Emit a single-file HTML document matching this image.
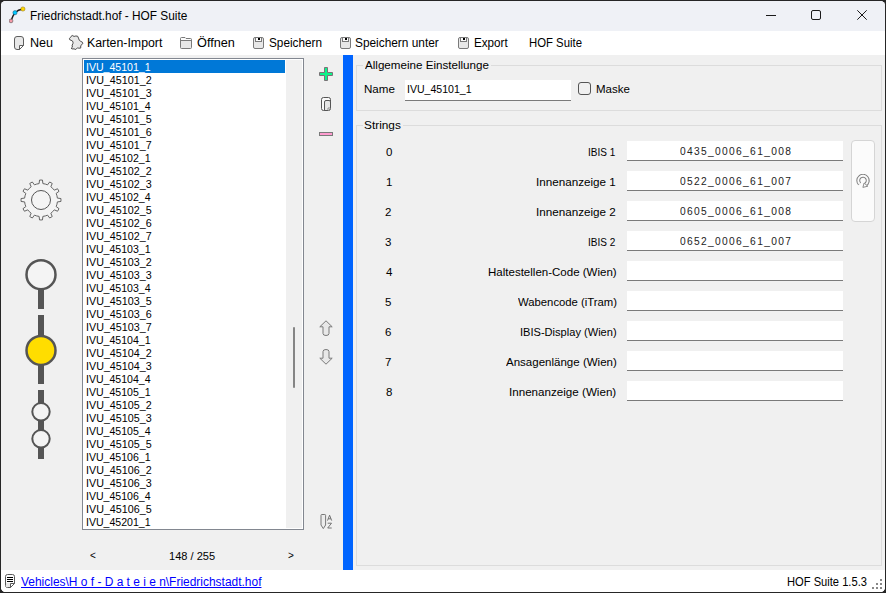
<!DOCTYPE html>
<html><head><meta charset="utf-8">
<style>
*{box-sizing:border-box}
html,body{margin:0;padding:0}
body{width:886px;height:593px;overflow:hidden;background:#262626;position:relative;font-family:"Liberation Sans",sans-serif;font-size:12px;color:#000}
.win{position:absolute;left:0;top:0;width:886px;height:593px;border-radius:8px;overflow:hidden;background:#f0f0f0}
.fe{position:absolute;background:#262626}
.title{position:absolute;left:0;top:0;width:886px;height:31px;background:#eff1f6}
.menu{position:absolute;left:0;top:31px;width:886px;height:24px;background:#fff}
.status{position:absolute;left:0;top:570px;width:886px;height:23px;background:#fff}
.t{position:absolute;white-space:nowrap;line-height:13px;font-size:12px;transform-origin:0 0;color:#000}
.list{position:absolute;left:82px;top:58px;width:222px;height:472px;border:1px solid #828790;background:#fff}
.sel{position:absolute;left:84px;top:60px;width:201px;height:13px;background:#0078d7}
.track{position:absolute;left:286px;top:60px;width:16px;height:468px;background:#f0f0f0}
.thumb{position:absolute;left:293px;top:327px;width:2px;height:61px;background:#858585;border-radius:1px}
.bluebar{position:absolute;left:343px;top:55px;width:10px;height:515px;background:#0064ff}
.gb{position:absolute;border:1px solid #dcdcdc}
.gbt{position:absolute;background:#f0f0f0;height:6px}
.inp{position:absolute;background:#fff;border-bottom:1px solid #7a7a7a}
</style></head><body>
<div class="win">
  <div class="title">
    <svg style="position:absolute;left:9px;top:6px" width="18" height="18" viewBox="0 0 18 18">
      <path d="M2 15 Q4 9 6 6.7 Q9 3.6 13.9 3" stroke="#1a1a1a" stroke-width="1.3" fill="none"/>
      <circle cx="2" cy="14.9" r="1.9" fill="#f59aa8" stroke="#555" stroke-width="0.6"/>
      <circle cx="6" cy="6.7" r="2.1" fill="#00c8ff" stroke="#1a4a66" stroke-width="0.5"/>
      <circle cx="13.9" cy="3" r="2.1" fill="#ffd800" stroke="#8a6a00" stroke-width="0.5"/>
    </svg>
    <div style="position:absolute;left:766px;top:15px;width:10px;height:1px;background:#1a1a1a"></div>
    <div style="position:absolute;left:811px;top:10px;width:10px;height:10px;border:1px solid #1a1a1a;border-radius:2px"></div>
    <svg style="position:absolute;left:857px;top:10px" width="10" height="10" viewBox="0 0 10 10"><path d="M0.3 0.3L9.7 9.7M9.7 0.3L0.3 9.7" stroke="#1a1a1a" stroke-width="1"/></svg>
  </div>
  <div class="menu">
    <svg style="position:absolute;left:14px;top:5px" width="10" height="14" viewBox="0 0 10 14"><path d="M3 0.5H7Q9.5 0.5 9.5 3V9.5L5.5 13.5H3Q0.5 13.5 0.5 11V3Q0.5 0.5 3 0.5Z" fill="#e8e8e8" stroke="#5e5e5e"/><path d="M5.5 13.5V9.5H9.5Z" fill="#fff" stroke="#5e5e5e" stroke-linejoin="round"/></svg>
    <svg style="position:absolute;left:66px;top:2px" width="20" height="20" viewBox="0 0 20 20"><path d="M5.1 3.4 L6.2 2.5 L8.1 3.4 L9.8 3.0 L11.6 3.2 L12.5 5.1 L13.3 7.3 L14.8 8.4 L16.5 9.3 L16.7 10.8 L15.9 11.6 L14.8 12.5 L14.7 14.2 L14.8 15.0 L12.8 15.2 L11.5 14.8 L9.8 16.5 L8.1 15.9 L6.1 15.9 L5.1 15.3 L6.4 14.2 L6.1 12.1 L6.9 10.8 L7.1 9.8 L6.6 8.1 L5.1 7.3 L3.7 6.7 L3.4 5.4 L4.4 4.6Z" fill="#e8e8e8" stroke="#4a4a4a" stroke-width="1" stroke-linejoin="round"/></svg>
    <svg style="position:absolute;left:180px;top:6px" width="12" height="12" viewBox="0 0 12 12"><path d="M1.5 0.5H5L6 1.5H10.5Q11.5 1.5 11.5 2.5V10.5Q11.5 11.5 10.5 11.5H1.5Q0.5 11.5 0.5 10.5V1.5Q0.5 0.5 1.5 0.5Z" fill="#e8e8e8" stroke="#7a7a7a"/><path d="M1 1H5L6 2H11V3.5H1Z" fill="#fbfbfb"/><path d="M0.5 3.5H11.5" stroke="#7a7a7a"/></svg>
    <svg style="position:absolute;left:253px;top:6px" width="11" height="12" viewBox="0 0 11 12"><rect x="0.5" y="0.5" width="10" height="11" rx="1.5" fill="#e8e8e8" stroke="#7a7a7a"/><rect x="2.5" y="0.5" width="6" height="4" fill="#fbfbfb" stroke="#7a7a7a"/><rect x="5" y="1" width="2" height="2" fill="#000"/></svg>
    <svg style="position:absolute;left:340px;top:6px" width="11" height="12" viewBox="0 0 11 12"><rect x="0.5" y="0.5" width="10" height="11" rx="1.5" fill="#e8e8e8" stroke="#7a7a7a"/><rect x="2.5" y="0.5" width="6" height="4" fill="#fbfbfb" stroke="#7a7a7a"/><rect x="5" y="1" width="2" height="2" fill="#000"/></svg>
    <svg style="position:absolute;left:458px;top:6px" width="11" height="12" viewBox="0 0 11 12"><rect x="0.5" y="0.5" width="10" height="11" rx="1.5" fill="#e8e8e8" stroke="#7a7a7a"/><rect x="2.5" y="0.5" width="6" height="4" fill="#fbfbfb" stroke="#7a7a7a"/><rect x="5" y="1" width="2" height="2" fill="#000"/></svg>
  </div>

  <svg style="position:absolute;left:0;top:55px" width="80" height="420" viewBox="0 55 80 420">
    <g transform="translate(41,200)">
      <path d="M-4.27 -15.94 L-1.90 -16.39 L-1.46 -19.95 L1.46 -19.95 L1.90 -16.39 L4.27 -15.94 L6.55 -15.14 L8.70 -18.01 L11.24 -16.54 L9.84 -13.25 L11.67 -11.67 L13.25 -9.84 L16.54 -11.24 L18.01 -8.70 L15.14 -6.55 L15.94 -4.27 L16.39 -1.90 L19.95 -1.46 L19.95 1.46 L16.39 1.90 L15.94 4.27 L15.14 6.55 L18.01 8.70 L16.54 11.24 L13.25 9.84 L11.67 11.67 L9.84 13.25 L11.24 16.54 L8.70 18.01 L6.55 15.14 L4.27 15.94 L1.90 16.39 L1.46 19.95 L-1.46 19.95 L-1.90 16.39 L-4.27 15.94 L-6.55 15.14 L-8.70 18.01 L-11.24 16.54 L-9.84 13.25 L-11.67 11.67 L-13.25 9.84 L-16.54 11.24 L-18.01 8.70 L-15.14 6.55 L-15.94 4.27 L-16.39 1.90 L-19.95 1.46 L-19.95 -1.46 L-16.39 -1.90 L-15.94 -4.27 L-15.14 -6.55 L-18.01 -8.70 L-16.54 -11.24 L-13.25 -9.84 L-11.67 -11.67 L-9.84 -13.25 L-11.24 -16.54 L-8.70 -18.01 L-6.55 -15.14Z" fill="#f4f4f4" stroke="#666" stroke-width="1"/>
      <circle r="9.5" fill="none" stroke="#555" stroke-width="1"/>
    </g>
    <rect x="38" y="289" width="6" height="20" fill="#555"/>
    <rect x="38" y="315" width="6" height="22" fill="#555"/>
    <rect x="38" y="364" width="6" height="20" fill="#555"/>
    <rect x="38" y="390" width="6" height="15" fill="#555"/>
    <rect x="38" y="419" width="6" height="12" fill="#555"/>
    <rect x="38" y="446" width="6" height="13" fill="#555"/>
    <circle cx="41" cy="274.7" r="14.5" fill="#f4f4f4" stroke="#555" stroke-width="2.5"/>
    <circle cx="41" cy="350.4" r="14.5" fill="#ffdd00" stroke="#555" stroke-width="2.5"/>
    <circle cx="41" cy="411.8" r="8.7" fill="#f4f4f4" stroke="#555" stroke-width="2"/>
    <circle cx="41" cy="438.8" r="8.7" fill="#f4f4f4" stroke="#555" stroke-width="2"/>
  </svg>

  <div class="list"></div>
  <div class="sel"></div>
  <div class="track"></div>
  <div class="thumb"></div>

  <svg style="position:absolute;left:319px;top:67px" width="14" height="14" viewBox="0 0 14 14"><path d="M5.5 0.5H8.5V5.5H13.5V8.5H8.5V13.5H5.5V8.5H0.5V5.5H5.5Z" fill="#0cf58a" stroke="#7a7276" stroke-width="1"/></svg>
  <svg style="position:absolute;left:321px;top:97px" width="10" height="14" viewBox="0 0 10 14"><rect x="0.5" y="0.5" width="9" height="13" rx="2" fill="#f8f8f8" stroke="#555"/><path d="M3.5 13.5V5Q3.5 3.5 5 3.5H8Q9.5 3.5 9.5 5V11L7 13.5Z" fill="#e6e6e6" stroke="#555"/><path d="M9.5 11H7V13.5" fill="#fff" stroke="#777" stroke-width="0.8"/></svg>
  <div style="position:absolute;left:319px;top:132px;width:14px;height:4px;background:#ff9cd0;border:1px solid #7a7a7a"></div>
  <svg style="position:absolute;left:319px;top:320px" width="14" height="16" viewBox="0 0 14 16"><path d="M7 0.8L13.2 6.8H10V13.5Q10 15.5 7 15.5Q4 15.5 4 13.5V6.8H0.8Z" fill="#e8e8e8" stroke="#7a7a7a" stroke-width="1" stroke-linejoin="round"/></svg>
  <svg style="position:absolute;left:319px;top:349px" width="14" height="16" viewBox="0 0 14 16"><path d="M7 15.2L13.2 9.2H10V2.5Q10 0.5 7 0.5Q4 0.5 4 2.5V9.2H0.8Z" fill="#e8e8e8" stroke="#7a7a7a" stroke-width="1" stroke-linejoin="round"/></svg>
  <svg style="position:absolute;left:320px;top:513px" width="14" height="17" viewBox="0 0 14 17"><path d="M1.9 1.5H4.8Q5.6 1.5 5.6 2.3V12L3.3 15.6L1 12V2.3Q1 1.5 1.9 1.5Z" fill="#ececec" stroke="#777" stroke-width="1"/><path d="M7.5 7.6L9.6 2.2L11.7 7.6M8.3 5.8H10.9" fill="none" stroke="#666" stroke-width="0.9"/><path d="M7.7 10.2H11.5L7.7 15H11.7" fill="none" stroke="#666" stroke-width="0.9"/></svg>

  <div class="bluebar"></div>

  <div class="gb" style="left:356px;top:65px;width:526px;height:46px"></div>
  <div class="gbt" style="left:363px;top:62px;width:128px"></div>
  <div class="inp" style="left:405px;top:80px;width:166px;height:21px"></div>
  <div style="position:absolute;left:578px;top:82px;width:13px;height:13px;border:1px solid #555;border-radius:3px;background:#f0f0f0"></div>

  <div class="gb" style="left:356px;top:125px;width:526px;height:441px"></div>
  <div class="gbt" style="left:363px;top:122px;width:40px"></div>
<div class="inp" style="left:627px;top:141px;width:216px;height:20px"></div>
<div class="inp" style="left:627px;top:171px;width:216px;height:20px"></div>
<div class="inp" style="left:627px;top:201px;width:216px;height:20px"></div>
<div class="inp" style="left:627px;top:231px;width:216px;height:20px"></div>
<div class="inp" style="left:627px;top:261px;width:216px;height:20px"></div>
<div class="inp" style="left:627px;top:291px;width:216px;height:20px"></div>
<div class="inp" style="left:627px;top:321px;width:216px;height:20px"></div>
<div class="inp" style="left:627px;top:351px;width:216px;height:20px"></div>
<div class="inp" style="left:627px;top:381px;width:216px;height:20px"></div>

  <div style="position:absolute;left:851px;top:140px;width:24px;height:82px;background:#fbfbfb;border:1px solid #d5d5d5;border-radius:4px"></div>
  <svg style="position:absolute;left:856px;top:174px" width="15" height="15" viewBox="0 0 15 15"><path d="M3.64 9.86A4.75 4.75 0 1 1 9.4 10.6" fill="none" stroke="#808080" stroke-width="3.9"/><path d="M3.64 9.86A4.75 4.75 0 1 1 9.4 10.6" fill="none" stroke="#fbfbfb" stroke-width="1.9"/><path d="M6.9 13.4L11.8 12.2L8.1 9Z" fill="#fbfbfb" stroke="#808080" stroke-width="0.9" stroke-linejoin="round"/></svg>

  <div class="status">
    <svg style="position:absolute;left:5px;top:4px" width="10" height="14" viewBox="0 0 10 14"><path d="M2.5 0.5H7.5Q9.5 0.5 9.5 2.5V9.5L5.5 13.5H2.5Q0.5 13.5 0.5 11.5V2.5Q0.5 0.5 2.5 0.5Z" fill="#fdfdfd" stroke="#5a5a5a"/><rect x="1" y="9" width="4.5" height="4" fill="#e8e8e8"/><path d="M2 3.5H8M2 5.5H8M2 7.5H8" stroke="#000" stroke-width="1"/><path d="M5.5 13.5V9.5H9.5Z" fill="#fff" stroke="#5a5a5a" stroke-linejoin="round"/></svg>
    <div style="position:absolute;left:872px;top:17px;width:2px;height:2px;background:#888"></div>
    <div style="position:absolute;left:876px;top:17px;width:2px;height:2px;background:#888"></div>
    <div style="position:absolute;left:880px;top:17px;width:2px;height:2px;background:#888"></div>
    <div style="position:absolute;left:876px;top:13px;width:2px;height:2px;background:#888"></div>
    <div style="position:absolute;left:880px;top:13px;width:2px;height:2px;background:#888"></div>
    <div style="position:absolute;left:880px;top:9px;width:2px;height:2px;background:#888"></div>
  </div>
<div class="t" id="title" style="left:30.01px;top:10.00px;font-family:'Liberation Sans',sans-serif;font-size:12px;transform:scaleX(0.9873);">Friedrichstadt.hof - HOF Suite</div>
<div class="t" id="m_neu" style="left:29.95px;top:37.00px;font-family:'Liberation Sans',sans-serif;font-size:12px;transform:scaleX(1.0500);">Neu</div>
<div class="t" id="m_karten" style="left:86.97px;top:37.00px;font-family:'Liberation Sans',sans-serif;font-size:12px;transform:scaleX(1.0278);">Karten-Import</div>
<div class="t" id="m_oeffnen" style="left:196.97px;top:37.00px;font-family:'Liberation Sans',sans-serif;font-size:12px;transform:scaleX(1.0580);">Öffnen</div>
<div class="t" id="m_speichern" style="left:269.02px;top:37.00px;font-family:'Liberation Sans',sans-serif;font-size:12px;transform:scaleX(0.9808);">Speichern</div>
<div class="t" id="m_speichernu" style="left:355.01px;top:37.00px;font-family:'Liberation Sans',sans-serif;font-size:12px;transform:scaleX(0.9881);">Speichern unter</div>
<div class="t" id="m_export" style="left:474.03px;top:37.00px;font-family:'Liberation Sans',sans-serif;font-size:12px;transform:scaleX(0.9706);">Export</div>
<div class="t" id="m_hof" style="left:529.05px;top:37.00px;font-family:'Liberation Sans',sans-serif;font-size:12px;transform:scaleX(0.9455);">HOF Suite</div>
<div class="t" id="pg_prev" style="left:90.00px;top:549.00px;font-family:'Liberation Sans',sans-serif;font-size:10px;transform:scaleX(1.0000);">&lt;</div>
<div class="t" id="pg_num" style="left:169.04px;top:550.00px;font-family:'Liberation Sans',sans-serif;font-size:11.5px;transform:scaleX(0.9611);">148 / 255</div>
<div class="t" id="pg_next" style="left:288.00px;top:549.00px;font-family:'Liberation Sans',sans-serif;font-size:10px;transform:scaleX(1.0000);">&gt;</div>
<div class="t" id="g1" style="left:365.00px;top:59.00px;font-family:'Liberation Sans',sans-serif;font-size:11.5px;transform:scaleX(1.0095);">Allgemeine Einstellunge</div>
<div class="t" id="name" style="left:363.98px;top:83.00px;font-family:'Liberation Sans',sans-serif;font-size:11.5px;transform:scaleX(1.0060);">Name</div>
<div class="t" id="maske" style="left:596.00px;top:83.00px;font-family:'Liberation Sans',sans-serif;font-size:11.5px;transform:scaleX(1.0009);">Maske</div>
<div class="t" id="g2" style="left:363.97px;top:119.00px;font-family:'Liberation Sans',sans-serif;font-size:11.5px;transform:scaleX(1.0302);">Strings</div>
<div class="t" id="st_link" style="left:21.00px;top:576.00px;font-family:'Liberation Sans',sans-serif;font-size:12px;transform:scaleX(0.9959);color:#0000ff;text-decoration:underline">Vehicles\H o f - D a t e i e n\Friedrichstadt.hof</div>
<div class="t" id="st_ver" style="left:787.07px;top:576.00px;font-family:'Liberation Sans',sans-serif;font-size:12px;transform:scaleX(0.9294);">HOF Suite 1.5.3</div>
<div class="t" id="name_val" style="left:407.08px;top:83.00px;font-family:'Liberation Sans',sans-serif;font-size:11.5px;transform:scaleX(0.9187);">IVU_45101_1</div>
<div class="t" id="idx0" style="left:386.00px;top:146.00px;font-family:'Liberation Sans',sans-serif;font-size:11.5px;transform:scaleX(1.0000);">0</div>
<div class="t" id="lab0" style="left:588.13px;top:146.00px;font-family:'Liberation Sans',sans-serif;font-size:11.5px;transform:scaleX(0.8722);">IBIS 1</div>
<div class="t" id="val0" style="left:680.00px;top:145.00px;font-family:'Liberation Sans',sans-serif;font-size:11.5px;transform:scaleX(0.8880);letter-spacing:1.5px;color:#222">0435_0006_61_008</div>
<div class="t" id="idx1" style="left:386.00px;top:176.00px;font-family:'Liberation Sans',sans-serif;font-size:11.5px;transform:scaleX(1.0000);">1</div>
<div class="t" id="lab1" style="left:535.99px;top:176.00px;font-family:'Liberation Sans',sans-serif;font-size:11.5px;transform:scaleX(1.0151);">Innenanzeige 1</div>
<div class="t" id="val1" style="left:680.00px;top:175.00px;font-family:'Liberation Sans',sans-serif;font-size:11.5px;transform:scaleX(0.8880);letter-spacing:1.5px;color:#222">0522_0006_61_007</div>
<div class="t" id="idx2" style="left:385.00px;top:206.00px;font-family:'Liberation Sans',sans-serif;font-size:11.5px;transform:scaleX(1.0000);">2</div>
<div class="t" id="lab2" style="left:535.99px;top:206.00px;font-family:'Liberation Sans',sans-serif;font-size:11.5px;transform:scaleX(1.0151);">Innenanzeige 2</div>
<div class="t" id="val2" style="left:680.00px;top:205.00px;font-family:'Liberation Sans',sans-serif;font-size:11.5px;transform:scaleX(0.8880);letter-spacing:1.5px;color:#222">0605_0006_61_008</div>
<div class="t" id="idx3" style="left:385.00px;top:236.00px;font-family:'Liberation Sans',sans-serif;font-size:11.5px;transform:scaleX(1.0000);">3</div>
<div class="t" id="lab3" style="left:588.13px;top:236.00px;font-family:'Liberation Sans',sans-serif;font-size:11.5px;transform:scaleX(0.8722);">IBIS 2</div>
<div class="t" id="val3" style="left:680.00px;top:235.00px;font-family:'Liberation Sans',sans-serif;font-size:11.5px;transform:scaleX(0.8880);letter-spacing:1.5px;color:#222">0652_0006_61_007</div>
<div class="t" id="idx4" style="left:386.00px;top:266.00px;font-family:'Liberation Sans',sans-serif;font-size:11.5px;transform:scaleX(1.0000);">4</div>
<div class="t" id="lab4" style="left:488.00px;top:266.00px;font-family:'Liberation Sans',sans-serif;font-size:11.5px;transform:scaleX(1.0019);">Haltestellen-Code (Wien)</div>
<div class="t" id="idx5" style="left:385.00px;top:296.00px;font-family:'Liberation Sans',sans-serif;font-size:11.5px;transform:scaleX(1.0000);">5</div>
<div class="t" id="lab5" style="left:518.00px;top:296.00px;font-family:'Liberation Sans',sans-serif;font-size:11.5px;transform:scaleX(0.9830);">Wabencode (iTram)</div>
<div class="t" id="idx6" style="left:385.00px;top:326.00px;font-family:'Liberation Sans',sans-serif;font-size:11.5px;transform:scaleX(1.0000);">6</div>
<div class="t" id="lab6" style="left:520.04px;top:326.00px;font-family:'Liberation Sans',sans-serif;font-size:11.5px;transform:scaleX(0.9628);">IBIS-Display (Wien)</div>
<div class="t" id="idx7" style="left:385.00px;top:356.00px;font-family:'Liberation Sans',sans-serif;font-size:11.5px;transform:scaleX(1.0000);">7</div>
<div class="t" id="lab7" style="left:506.00px;top:356.00px;font-family:'Liberation Sans',sans-serif;font-size:11.5px;transform:scaleX(1.0020);">Ansagenlänge (Wien)</div>
<div class="t" id="idx8" style="left:386.00px;top:386.00px;font-family:'Liberation Sans',sans-serif;font-size:11.5px;transform:scaleX(1.0000);">8</div>
<div class="t" id="lab8" style="left:508.99px;top:386.00px;font-family:'Liberation Sans',sans-serif;font-size:11.5px;transform:scaleX(1.0106);">Innenanzeige (Wien)</div>
<div class="t" id="li0" style="left:86.08px;top:61.00px;font-family:'Liberation Sans',sans-serif;font-size:11.5px;transform:scaleX(0.9187);color:#fff">IVU_45101_1</div>
<div class="t" id="li1" style="left:86.07px;top:74.00px;font-family:'Liberation Sans',sans-serif;font-size:11.5px;transform:scaleX(0.9326);">IVU_45101_2</div>
<div class="t" id="li2" style="left:86.07px;top:87.00px;font-family:'Liberation Sans',sans-serif;font-size:11.5px;transform:scaleX(0.9326);">IVU_45101_3</div>
<div class="t" id="li3" style="left:86.08px;top:100.00px;font-family:'Liberation Sans',sans-serif;font-size:11.5px;transform:scaleX(0.9183);">IVU_45101_4</div>
<div class="t" id="li4" style="left:86.07px;top:113.00px;font-family:'Liberation Sans',sans-serif;font-size:11.5px;transform:scaleX(0.9326);">IVU_45101_5</div>
<div class="t" id="li5" style="left:86.07px;top:126.00px;font-family:'Liberation Sans',sans-serif;font-size:11.5px;transform:scaleX(0.9326);">IVU_45101_6</div>
<div class="t" id="li6" style="left:86.07px;top:139.00px;font-family:'Liberation Sans',sans-serif;font-size:11.5px;transform:scaleX(0.9326);">IVU_45101_7</div>
<div class="t" id="li7" style="left:86.08px;top:152.00px;font-family:'Liberation Sans',sans-serif;font-size:11.5px;transform:scaleX(0.9187);">IVU_45102_1</div>
<div class="t" id="li8" style="left:86.07px;top:165.00px;font-family:'Liberation Sans',sans-serif;font-size:11.5px;transform:scaleX(0.9326);">IVU_45102_2</div>
<div class="t" id="li9" style="left:86.07px;top:178.00px;font-family:'Liberation Sans',sans-serif;font-size:11.5px;transform:scaleX(0.9326);">IVU_45102_3</div>
<div class="t" id="li10" style="left:86.08px;top:191.00px;font-family:'Liberation Sans',sans-serif;font-size:11.5px;transform:scaleX(0.9183);">IVU_45102_4</div>
<div class="t" id="li11" style="left:86.07px;top:204.00px;font-family:'Liberation Sans',sans-serif;font-size:11.5px;transform:scaleX(0.9326);">IVU_45102_5</div>
<div class="t" id="li12" style="left:86.07px;top:217.00px;font-family:'Liberation Sans',sans-serif;font-size:11.5px;transform:scaleX(0.9326);">IVU_45102_6</div>
<div class="t" id="li13" style="left:86.07px;top:230.00px;font-family:'Liberation Sans',sans-serif;font-size:11.5px;transform:scaleX(0.9326);">IVU_45102_7</div>
<div class="t" id="li14" style="left:86.08px;top:243.00px;font-family:'Liberation Sans',sans-serif;font-size:11.5px;transform:scaleX(0.9187);">IVU_45103_1</div>
<div class="t" id="li15" style="left:86.07px;top:256.00px;font-family:'Liberation Sans',sans-serif;font-size:11.5px;transform:scaleX(0.9326);">IVU_45103_2</div>
<div class="t" id="li16" style="left:86.07px;top:269.00px;font-family:'Liberation Sans',sans-serif;font-size:11.5px;transform:scaleX(0.9326);">IVU_45103_3</div>
<div class="t" id="li17" style="left:86.08px;top:282.00px;font-family:'Liberation Sans',sans-serif;font-size:11.5px;transform:scaleX(0.9183);">IVU_45103_4</div>
<div class="t" id="li18" style="left:86.07px;top:295.00px;font-family:'Liberation Sans',sans-serif;font-size:11.5px;transform:scaleX(0.9326);">IVU_45103_5</div>
<div class="t" id="li19" style="left:86.07px;top:308.00px;font-family:'Liberation Sans',sans-serif;font-size:11.5px;transform:scaleX(0.9326);">IVU_45103_6</div>
<div class="t" id="li20" style="left:86.07px;top:321.00px;font-family:'Liberation Sans',sans-serif;font-size:11.5px;transform:scaleX(0.9326);">IVU_45103_7</div>
<div class="t" id="li21" style="left:86.08px;top:334.00px;font-family:'Liberation Sans',sans-serif;font-size:11.5px;transform:scaleX(0.9187);">IVU_45104_1</div>
<div class="t" id="li22" style="left:86.07px;top:347.00px;font-family:'Liberation Sans',sans-serif;font-size:11.5px;transform:scaleX(0.9326);">IVU_45104_2</div>
<div class="t" id="li23" style="left:86.07px;top:360.00px;font-family:'Liberation Sans',sans-serif;font-size:11.5px;transform:scaleX(0.9326);">IVU_45104_3</div>
<div class="t" id="li24" style="left:86.08px;top:373.00px;font-family:'Liberation Sans',sans-serif;font-size:11.5px;transform:scaleX(0.9183);">IVU_45104_4</div>
<div class="t" id="li25" style="left:86.08px;top:386.00px;font-family:'Liberation Sans',sans-serif;font-size:11.5px;transform:scaleX(0.9187);">IVU_45105_1</div>
<div class="t" id="li26" style="left:86.07px;top:399.00px;font-family:'Liberation Sans',sans-serif;font-size:11.5px;transform:scaleX(0.9326);">IVU_45105_2</div>
<div class="t" id="li27" style="left:86.07px;top:412.00px;font-family:'Liberation Sans',sans-serif;font-size:11.5px;transform:scaleX(0.9326);">IVU_45105_3</div>
<div class="t" id="li28" style="left:86.08px;top:425.00px;font-family:'Liberation Sans',sans-serif;font-size:11.5px;transform:scaleX(0.9183);">IVU_45105_4</div>
<div class="t" id="li29" style="left:86.07px;top:438.00px;font-family:'Liberation Sans',sans-serif;font-size:11.5px;transform:scaleX(0.9326);">IVU_45105_5</div>
<div class="t" id="li30" style="left:86.08px;top:451.00px;font-family:'Liberation Sans',sans-serif;font-size:11.5px;transform:scaleX(0.9187);">IVU_45106_1</div>
<div class="t" id="li31" style="left:86.07px;top:464.00px;font-family:'Liberation Sans',sans-serif;font-size:11.5px;transform:scaleX(0.9326);">IVU_45106_2</div>
<div class="t" id="li32" style="left:86.07px;top:477.00px;font-family:'Liberation Sans',sans-serif;font-size:11.5px;transform:scaleX(0.9326);">IVU_45106_3</div>
<div class="t" id="li33" style="left:86.08px;top:490.00px;font-family:'Liberation Sans',sans-serif;font-size:11.5px;transform:scaleX(0.9183);">IVU_45106_4</div>
<div class="t" id="li34" style="left:86.07px;top:503.00px;font-family:'Liberation Sans',sans-serif;font-size:11.5px;transform:scaleX(0.9326);">IVU_45106_5</div>
<div class="t" id="li35" style="left:86.08px;top:516.00px;font-family:'Liberation Sans',sans-serif;font-size:11.5px;transform:scaleX(0.9187);">IVU_45201_1</div>
</div>
<div class="fe" style="left:0;top:0;width:886px;height:1px"></div><div class="fe" style="left:0;top:592px;width:886px;height:1px"></div><div class="fe" style="left:0;top:0;width:1px;height:593px"></div><div class="fe" style="left:885px;top:0;width:1px;height:593px"></div>
</body></html>
